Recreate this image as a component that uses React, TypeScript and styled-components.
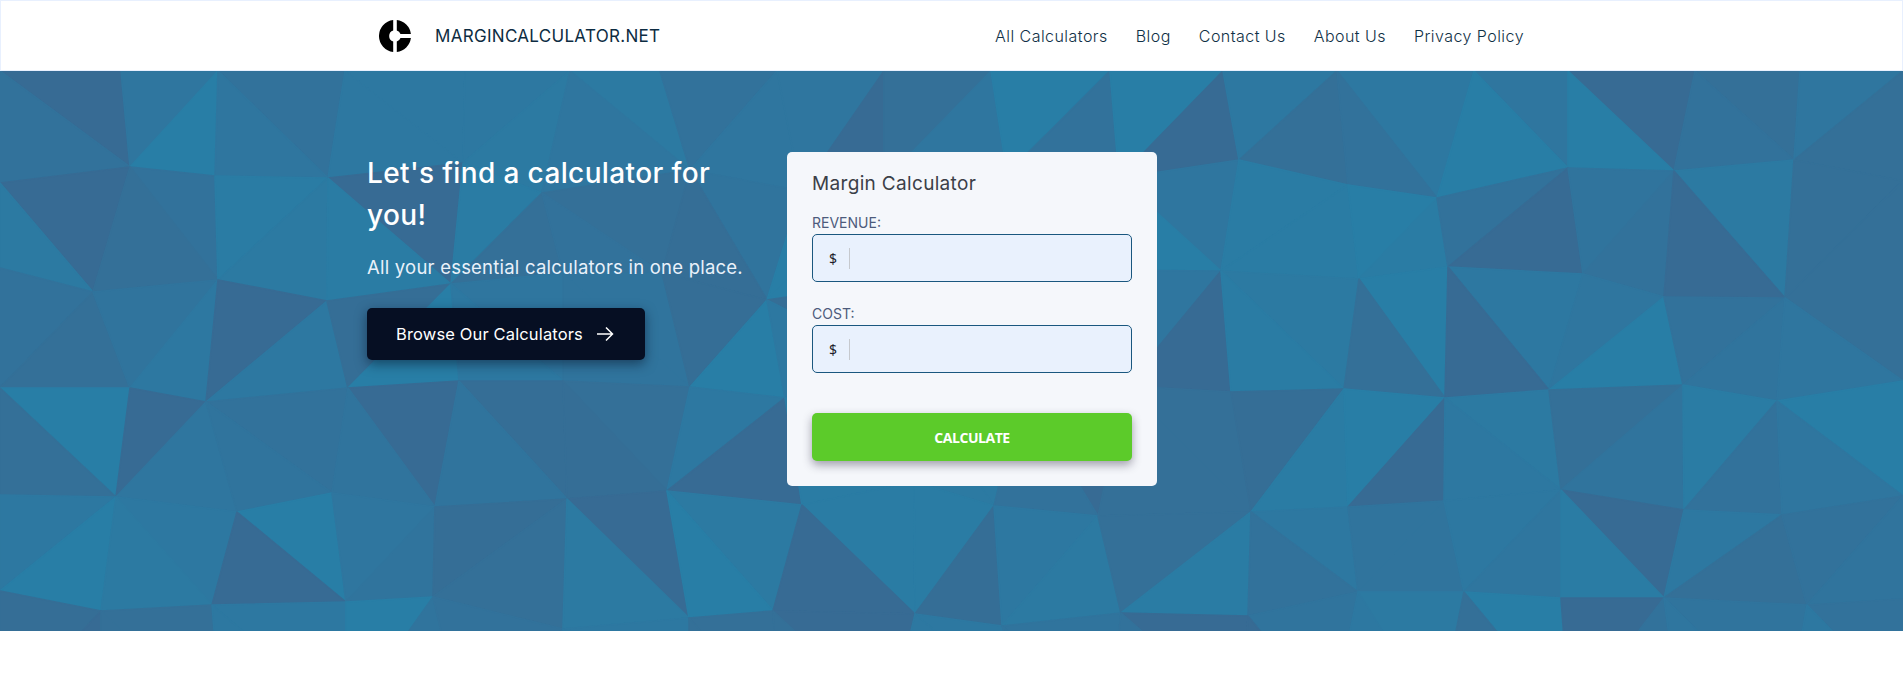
import { useState } from 'react';
import styled, { createGlobalStyle } from 'styled-components';

const GlobalStyle = createGlobalStyle`
  * {
    box-sizing: border-box;
  }

  body {
    margin: 0;
    background-color: #fff;
    font-family: Inter, "Liberation Sans", sans-serif;
  }
`;

type Point = [number, number];

const SHADES = [
  '#376b94', '#356e96', '#347098', '#32729b', '#30749d',
  '#2f769f', '#2d78a1', '#2c7aa2', '#2a7ca4', '#287ea6',
];

// Mesh points of the hero background, row by row
const MESH: Point[][] = [
  [[0, 0], [121, 0], [218, 0], [345, 0], [465, 0], [570, 0], [660, 0], [777, 0], [884, 0],
    [991, 0], [1110, 0], [1223, 0], [1337, 0], [1474, 0], [1568, 0], [1695, 0], [1800, 0], [1903, 0]],
  [[0, 112], [130, 96], [215, 105], [328, 107], [463, 92], [542, 122], [690, 99], [801, 120], [884, 110],
    [1007, 103], [1119, 107], [1239, 89], [1348, 114], [1437, 127], [1568, 97], [1674, 100], [1794, 89], [1903, 110]],
  [[0, 197], [93, 221], [218, 209], [327, 230], [451, 213], [563, 202], [662, 202], [767, 229], [880, 212],
    [1000, 214], [1100, 199], [1221, 200], [1359, 208], [1448, 196], [1583, 203], [1664, 226], [1785, 227], [1903, 227]],
  [[0, 317], [130, 317], [206, 331], [348, 317], [459, 310], [563, 310], [690, 316], [785, 327], [900, 296],
    [1022, 319], [1126, 315], [1231, 321], [1344, 318], [1445, 327], [1549, 319], [1683, 314], [1777, 330], [1903, 310]],
  [[0, 424], [116, 426], [237, 441], [332, 422], [435, 436], [567, 428], [667, 420], [802, 434], [914, 411],
    [994, 435], [1098, 445], [1251, 441], [1348, 436], [1444, 430], [1561, 419], [1684, 439], [1782, 444], [1903, 425]],
  [[0, 520], [101, 540], [212, 534], [346, 531], [433, 526], [563, 558], [689, 547], [773, 540], [915, 543],
    [1002, 555], [1121, 542], [1248, 545], [1358, 521], [1464, 521], [1561, 527], [1664, 527], [1807, 534], [1903, 528]],
  [[0, 649], [101, 649], [221, 649], [346, 649], [462, 649], [563, 649], [689, 649], [780, 649], [890, 649],
    [1040, 649], [1110, 649], [1243, 649], [1332, 649], [1438, 649], [1570, 649], [1680, 649], [1787, 649], [1918, 649]],
];

// One entry per cell: direction of the diagonal, shade of the upper and of the lower triangle
const CELLS = [
  '\\03 /59 \\35 \\66 /67 \\75 /35 /50 /25 /93 /90 /62 \\63 \\59 \\09 \\23 /52',
  '\\07 \\32 /87 \\08 /82 \\23 \\41 /99 /88 /88 \\59 /88 /98 /30 /43 \\70 /22',
  '/32 /46 /06 /19 \\56 \\44 /19 \\16 /66 /66 /50 \\78 \\92 \\60 /59 /34 \\25',
  '\\92 /05 \\34 \\04 \\14 \\21 /60 \\88 \\77 \\03 \\22 /18 /90 \\76 /24 /83 \\95',
  '/69 \\67 \\90 /54 /12 \\07 \\79 \\80 /81 /67 /28 \\63 /44 /65 \\08 /62 /34',
  '/10 \\22 \\66 /94 /33 \\66 \\22 \\02 \\66 \\44 \\03 \\40 \\76 \\92 /03 \\45 \\36',
].map((row) => row.split(' '));

const triangles = CELLS.flatMap((row, y) => row.flatMap((cell, x) => {
  const topLeft = MESH[y][x];
  const topRight = MESH[y][x + 1];
  const bottomLeft = MESH[y + 1][x];
  const bottomRight = MESH[y + 1][x + 1];
  const [diagonal, upper, lower] = cell;
  const rising = diagonal === '/';

  return [
    {
      id: `${x}-${y}-upper`,
      points: [topLeft, topRight, rising ? bottomLeft : bottomRight],
      color: SHADES[Number(upper)],
    },
    {
      id: `${x}-${y}-lower`,
      points: [rising ? topRight : topLeft, bottomRight, bottomLeft],
      color: SHADES[Number(lower)],
    },
  ];
}));

const Header = styled.header`
  height: 71px;
  border: 1px solid #e8f0fe;
  background-color: #fff;
`;

const HeaderInner = styled.div`
  display: flex;
  align-items: center;
  justify-content: space-between;
  width: 1145px;
  height: 69px;
  margin: 0 auto;
`;

const Brand = styled.a`
  display: flex;
  align-items: center;
  gap: 24px;
  color: #0d2c42;
  font-size: 17px;
  letter-spacing: 0.3px;
  white-space: nowrap;
  text-decoration: none;
`;

const Nav = styled.nav`
  display: flex;
  gap: 28px;
`;

const NavLink = styled.a`
  color: #0f3046;
  font-size: 16px;
  font-weight: 300;
  letter-spacing: 0.45px;
  white-space: nowrap;
  text-decoration: none;
`;

const Hero = styled.section`
  position: relative;
  height: 560px;
  padding-top: 81px;
  overflow: hidden;
  background-color: #2f769f;
`;

const Mesh = styled.svg`
  position: absolute;
  top: 0;
  left: 0;
  width: 1903px;
  height: 560px;
`;

const HeroInner = styled.div`
  position: relative;
  display: flex;
  align-items: flex-start;
  width: 1169px;
  margin: 0 auto;
`;

const Intro = styled.div`
  width: 420px;
`;

const Title = styled.h1`
  width: 380px;
  margin: 0 0 18px;
  color: #fff;
  font-size: 28px;
  font-weight: 500;
  line-height: 42px;
  letter-spacing: 0.37px;
`;

const Subtitle = styled.p`
  margin: 0 0 27px;
  color: #e9f1fa;
  font-size: 18.5px;
  line-height: 27px;
  letter-spacing: 0.22px;
  white-space: nowrap;
`;

const BrowseButton = styled.button`
  display: flex;
  align-items: center;
  justify-content: space-between;
  width: 278px;
  height: 52px;
  padding: 0 31px 0 29px;
  border: 0;
  border-radius: 5px;
  background-color: #060f23;
  box-shadow: 0 4px 12px rgba(6, 15, 35, 0.5);
  color: #fff;
  font-family: inherit;
  font-size: 16.5px;
  letter-spacing: 0.14px;
  white-space: nowrap;
`;

const Card = styled.form`
  width: 370px;
  height: 334px;
  padding: 18px 25px 25px;
  border-radius: 5px;
  background-color: #f5f7fb;
`;

const CardTitle = styled.h2`
  margin: 0 0 11px;
  color: #3b3f48;
  font-size: 19px;
  font-weight: 400;
  line-height: 28px;
  letter-spacing: 0.33px;
`;

const Field = styled.div`
  display: flex;
  flex-direction: column;
  height: 91px;
`;

const Label = styled.label`
  height: 25px;
  color: #4d5b7c;
  font-size: 14px;
  line-height: 27px;
  text-transform: uppercase;
`;

const InputBox = styled.div`
  display: flex;
  align-items: center;
  height: 48px;
  padding-left: 16px;
  border: 1px solid #1a577f;
  border-radius: 5px;
  background-color: #e9f1fd;
`;

const Currency = styled.span`
  width: 21px;
  height: 21px;
  border-right: 1px solid #c6c9ce;
  color: #1d1d2b;
  font-family: "Noto Sans", "Open Sans", sans-serif;
  font-size: 14px;
  line-height: 21px;
`;

const Input = styled.input`
  flex: 1;
  min-width: 0;
  height: 44px;
  padding: 0 12px;
  border: 0;
  outline: 0;
  background: transparent;
  font-family: inherit;
  font-size: 16px;
`;

const SubmitButton = styled.button`
  width: 100%;
  height: 48px;
  margin-top: 22px;
  border: 0;
  border-radius: 5px;
  background-color: #5ccb2a;
  box-shadow: 0 4px 10px rgba(40, 35, 60, 0.42);
  color: #fff;
  font-family: "Open Sans", "Noto Sans", sans-serif;
  font-size: 14px;
  font-weight: 700;
  letter-spacing: -0.45px;
`;

const FIELDS = [
  { id: 'revenue', label: 'Revenue:' },
  { id: 'cost', label: 'Cost:' },
];

const LINKS = ['All Calculators', 'Blog', 'Contact Us', 'About Us', 'Privacy Policy'];

const Logo = () => (
  <svg width="32" height="32" viewBox="0 0 32 32">
    <path d="M14.2 0.1 A16 16 0 0 0 14.2 31.9 V21.6 A5.9 5.9 0 0 1 14.2 10.4 Z" />
    <path d="M17.8 0.1 A16 16 0 0 1 31.9 14 H21.5 A6 6 0 0 0 17.8 10.4 Z" />
    <path d="M17.8 31.9 A16 16 0 0 0 31.9 18 H21.5 A6 6 0 0 1 17.8 21.6 Z" />
  </svg>
);

const Arrow = () => (
  <svg width="18" height="16" viewBox="0 0 18 16" fill="none" stroke="#fff" strokeWidth="1.5">
    <path d="M1 8 H16.5 M10 1.5 L16.5 8 L10 14.5" />
  </svg>
);

const App = () => {
  const [values, setValues] = useState<Record<string, string>>({ revenue: '', cost: '' });

  return (
    <>
      <GlobalStyle />
      <Header>
        <HeaderInner>
          <Brand href="#">
            <Logo />
            MARGINCALCULATOR.NET
          </Brand>
          <Nav>
            {LINKS.map(link => (
              <NavLink key={link} href="#">{link}</NavLink>
            ))}
          </Nav>
        </HeaderInner>
      </Header>
      <Hero>
        <Mesh viewBox="0 0 1903 560" aria-hidden="true">
          {triangles.map(({ id, points, color }) => (
            <polygon
              key={id}
              points={points.join(' ')}
              fill={color}
              stroke={color}
              strokeWidth="1.6"
              strokeLinejoin="round"
            />
          ))}
        </Mesh>
        <HeroInner>
          <Intro>
            <Title>Let&apos;s find a calculator for you!</Title>
            <Subtitle>All your essential calculators in one place.</Subtitle>
            <BrowseButton type="button">
              Browse Our Calculators
              <Arrow />
            </BrowseButton>
          </Intro>
          <Card onSubmit={(e) => e.preventDefault()}>
            <CardTitle>Margin Calculator</CardTitle>
            {FIELDS.map(({ id, label }) => (
              <Field key={id}>
                <Label htmlFor={id}>{label}</Label>
                <InputBox>
                  <Currency>$</Currency>
                  <Input
                    id={id}
                    type="text"
                    value={values[id]}
                    onChange={(e) => setValues({ ...values, [id]: e.target.value })}
                  />
                </InputBox>
              </Field>
            ))}
            <SubmitButton type="submit">CALCULATE</SubmitButton>
          </Card>
        </HeroInner>
      </Hero>
    </>
  );
};

export default App;
